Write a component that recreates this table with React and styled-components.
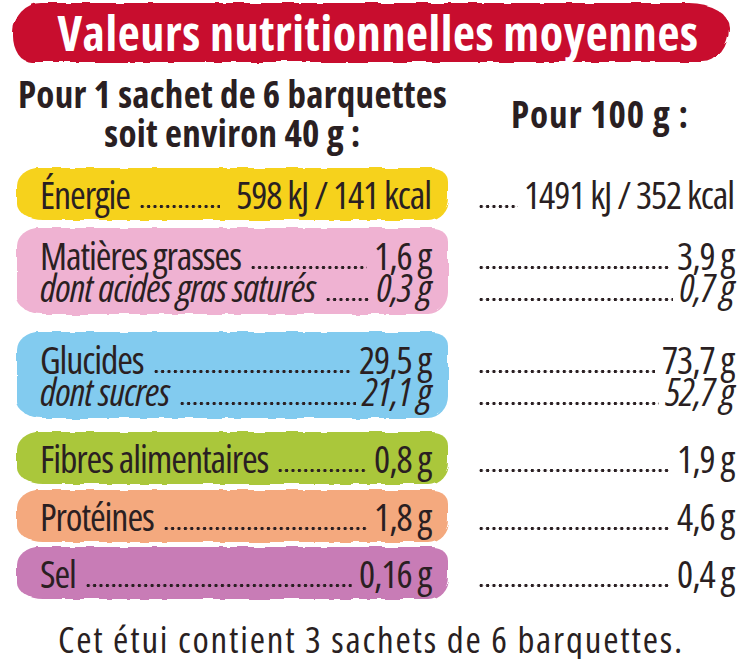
import React from 'react'
import styled, { createGlobalStyle } from 'styled-components'

const Global = createGlobalStyle`
  body {
    margin: 0;
    background: #fff;
    font-family: "Open Sans", "Liberation Sans", sans-serif;
    font-stretch: 75%;
    color: #2a1f22;
  }
`

const rows = [
  { bg: '#f6d21c', mt: 0, lines: [
    { label: 'Énergie', per: '598 kJ / 141 kcal', per100: '1491 kJ / 352 kcal', gap: 16 },
  ] },
  { bg: '#efb2d2', mt: 8, lines: [
    { label: 'Matières grasses', per: '1,6 g', per100: '3,9 g' },
    { label: 'dont acides gras saturés', per: '0,3 g', per100: '0,7 g', italic: true },
  ] },
  { bg: '#82cbef', mt: 18, lines: [
    { label: 'Glucides', per: '29,5 g', per100: '73,7 g' },
    { label: 'dont sucres', per: '21,1 g', per100: '52,7 g', italic: true },
  ] },
  { bg: '#aac73b', mt: 14, lines: [
    { label: 'Fibres alimentaires', per: '0,8 g', per100: '1,9 g' },
  ] },
  { bg: '#f4a97e', mt: 6, lines: [
    { label: 'Protéines', per: '1,8 g', per100: '4,6 g' },
  ] },
  { bg: '#c87bb6', mt: 5, lines: [
    { label: 'Sel', per: '0,16 g', per100: '0,4 g' },
  ] },
]

export default function App() {
  return (
    <Page>
      <Global />
      <svg width="0" height="0" style={{ position: 'absolute' }}>
        <filter id="brush">
          <feTurbulence type="fractalNoise" baseFrequency="0.06" numOctaves="2" seed="3" />
          <feDisplacementMap in="SourceGraphic" scale="5" />
        </filter>
      </svg>
      <Banner>
        <Title>Valeurs nutritionnelles moyennes</Title>
      </Banner>
      <Heads>
        <Head>
          <div>Pour 1 sachet de 6 barquettes</div>
          <div>soit environ 40 g :</div>
        </Head>
        <Head $right>Pour 100 g :</Head>
      </Heads>
      <Table>
        {rows.map((r, i) => (
          <Group key={i} $mt={r.mt}>
            <Band $bg={r.bg} $double={r.lines.length > 1}>
              {r.lines.map(l => (
                <Line key={l.label} $italic={l.italic}>
                  <span>{l.label}</span>
                  <Leader $mr={l.gap} />
                  <span>{l.per}</span>
                </Line>
              ))}
            </Band>
            <Side $double={r.lines.length > 1}>
              {r.lines.map(l => (
                <Line key={l.label} $italic={l.italic}>
                  <Leader $ml={0} $mr={l.gap ? 6 : undefined} />
                  <span>{l.per100}</span>
                </Line>
              ))}
            </Side>
          </Group>
        ))}
      </Table>
      <Footer>Cet étui contient 3 sachets de 6 barquettes.</Footer>
    </Page>
  )
}

const Page = styled.div`
  width: 744px;
  padding-top: 3px;
`

const Banner = styled.div`
  position: relative;
  z-index: 0;
  margin: 0 15px 0 13px;
  height: 59px;
  display: flex;
  align-items: center;
  justify-content: center;
  padding-left: 14px;
  &::before {
    content: '';
    position: absolute;
    inset: 0;
    z-index: -1;
    background: #c8102e;
    border-radius: 28px 40px 26px 18px / 30px 24px 34px 26px;
    filter: url(#brush);
  }
`

const Title = styled.h1`
  margin: 0;
  color: #fff;
  font-size: 48px;
  line-height: 59px;
  font-weight: 700;
  letter-spacing: 0.6px;
  white-space: nowrap;
`

const Heads = styled.div`
  display: grid;
  grid-template-columns: 431px 256px;
  column-gap: 30px;
  margin: 12px 0 0 17px;
  align-items: center;
`

const Head = styled.div`
  text-align: center;
  font-size: 37px;
  line-height: 39px;
  font-weight: 700;
  letter-spacing: ${p => (p.$right ? '1px' : '0.3px')};
  white-space: nowrap;
  padding-right: ${p => (p.$right ? '12px' : '0')};
`

const Table = styled.div`
  margin: 16px 0 0 17px;
`

const Group = styled.div`
  display: grid;
  grid-template-columns: 431px 256px;
  column-gap: 30px;
  margin-top: ${p => p.$mt}px;
`

const Band = styled.div`
  position: relative;
  z-index: 0;
  padding: ${p => (p.$double ? '11px' : '10px')} 17px ${p => (p.$double ? '11px' : '10px')} 23px;
  &::before {
    content: '';
    position: absolute;
    inset: 0;
    z-index: -1;
    background: ${p => p.$bg};
    border-radius: 22px 16px 20px 26px / 18px 14px 22px 16px;
    filter: url(#brush);
  }
`

const Side = styled.div`
  padding: ${p => (p.$double ? '11px' : '10px')} 0;
`

const Line = styled.div`
  display: flex;
  align-items: baseline;
  font-size: 38px;
  line-height: 32px;
  font-weight: 380;
  letter-spacing: ${p => (p.$italic ? '-0.7px' : '-1.1px')};
  white-space: nowrap;
  font-style: ${p => (p.$italic ? 'italic' : 'normal')};
`

const Leader = styled.span`
  flex: 1;
  min-width: 0;
  align-self: flex-end;
  height: 5px;
  margin: 0 ${p => (p.$mr ?? 7)}px 1px ${p => (p.$ml ?? 9)}px;
  background-image: radial-gradient(circle, #2a1f22 1.5px, transparent 2px);
  background-size: 6.4px 5px;
  background-repeat: repeat-x;
  background-position: left center;
`

const Footer = styled.div`
  margin-top: 20px;
  text-align: center;
  font-size: 37px;
  line-height: 40px;
  font-weight: 380;
  letter-spacing: 1.8px;
  white-space: nowrap;
  padding-right: 2px;
`
